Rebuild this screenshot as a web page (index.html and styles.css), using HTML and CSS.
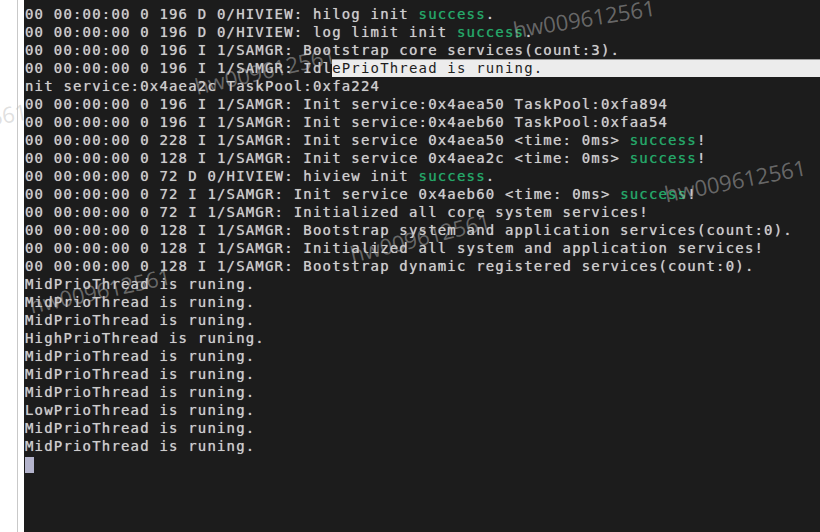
FILE: index.html
```html
<!DOCTYPE html>
<html>
<head>
<meta charset="utf-8">
<link rel="stylesheet" href="styles.css">
</head>
<body>
<div class="screen">
  <div class="gutter"></div>
  <div class="term">
    <div class="line">00 00:00:00 0 196 D 0/HIVIEW: hilog init <span class="ok">success</span>.</div>
    <div class="line">00 00:00:00 0 196 D 0/HIVIEW: log limit init <span class="ok">success</span>.</div>
    <div class="line">00 00:00:00 0 196 I 1/SAMGR: Bootstrap core services(count:3).</div>
    <div class="line row"><span>00 00:00:00 0 196 I 1/SAMGR: Idl</span><span class="sel">ePrioThread is runing.</span></div>
    <div class="line">nit service:0x4aea2c TaskPool:0xfa224</div>
    <div class="line">00 00:00:00 0 196 I 1/SAMGR: Init service:0x4aea50 TaskPool:0xfa894</div>
    <div class="line">00 00:00:00 0 196 I 1/SAMGR: Init service:0x4aeb60 TaskPool:0xfaa54</div>
    <div class="line">00 00:00:00 0 228 I 1/SAMGR: Init service 0x4aea50 &lt;time: 0ms&gt; <span class="ok">success</span>!</div>
    <div class="line">00 00:00:00 0 128 I 1/SAMGR: Init service 0x4aea2c &lt;time: 0ms&gt; <span class="ok">success</span>!</div>
    <div class="line">00 00:00:00 0 72 D 0/HIVIEW: hiview init <span class="ok">success</span>.</div>
    <div class="line">00 00:00:00 0 72 I 1/SAMGR: Init service 0x4aeb60 &lt;time: 0ms&gt; <span class="ok">success</span>!</div>
    <div class="line">00 00:00:00 0 72 I 1/SAMGR: Initialized all core system services!</div>
    <div class="line">00 00:00:00 0 128 I 1/SAMGR: Bootstrap system and application services(count:0).</div>
    <div class="line">00 00:00:00 0 128 I 1/SAMGR: Initialized all system and application services!</div>
    <div class="line">00 00:00:00 0 128 I 1/SAMGR: Bootstrap dynamic registered services(count:0).</div>
    <div class="line">MidPrioThread is runing.</div>
    <div class="line">MidPrioThread is runing.</div>
    <div class="line">MidPrioThread is runing.</div>
    <div class="line">HighPrioThread is runing.</div>
    <div class="line">MidPrioThread is runing.</div>
    <div class="line">MidPrioThread is runing.</div>
    <div class="line">MidPrioThread is runing.</div>
    <div class="line">LowPrioThread is runing.</div>
    <div class="line">MidPrioThread is runing.</div>
    <div class="line">MidPrioThread is runing.</div>
    <div class="line"><span class="cursor"></span></div>
  </div>
  <span class="wm wm1">hw009612561</span>
  <span class="wm wm2">hw009612561</span>
  <span class="wm wm3">hw009612561</span>
  <span class="wm wm4">hw009612561</span>
  <span class="wm wm5">hw009612561</span>
  <span class="wm wm6">hw009612561</span>
</div>
</body>
</html>
```

FILE: styles.css
```css
html, body {
  margin: 0;
  padding: 0;
  background: #ffffff;
}
.screen {
  position: relative;
  width: 820px;
  height: 532px;
  display: flex;
  overflow: hidden;
}
.gutter {
  width: 17px;
  border-right: 1px solid #c9c9c9;
  margin-right: 6px;
  background: #ffffff;
}
.term {
  flex: 1;
  background: #1c1c1c;
  padding: 5px 0 0 1px;
  font-family: "DejaVu Sans Mono", monospace;
  font-size: 14px;
  letter-spacing: 1.17px;
  color: #cdcdcd;
  text-shadow: 0 0 0.7px rgba(205, 205, 205, 0.8);
}
.line {
  height: 18px;
  line-height: 18px;
  white-space: pre;
}
.row {
  display: flex;
}
.sel {
  flex: 1;
  box-sizing: border-box;
  background: #ececec;
  border-top: 1px solid #9c9c9c;
  color: #1e1e1e;
  text-shadow: none;
  line-height: 16px;
}
.ok {
  color: #25a868;
  text-shadow: 0 0 0.7px rgba(37, 168, 104, 0.8);
}
.cursor {
  display: inline-block;
  width: 9px;
  height: 16px;
  margin-top: 2px;
  vertical-align: top;
  background: #b4b4cc;
}
.wm {
  position: absolute;
  width: 160px;
  height: 30px;
  line-height: 30px;
  text-align: center;
  font-family: "Open Sans", sans-serif;
  font-size: 22px;
  color: rgba(190, 190, 190, 0.48);
  white-space: nowrap;
}
.wm1 { left: 504px; top: 3px; transform: rotate(-9deg); }
.wm2 { left: 655px; top: 165px; transform: rotate(-11deg); }
.wm3 { left: 185px; top: 55px; transform: rotate(-13deg); }
.wm4 { left: -124px; top: 108px; transform: rotate(-10deg); }
.wm5 { left: 340px; top: 222px; transform: rotate(-14deg); }
.wm6 { left: 20px; top: 275px; transform: rotate(-12deg); }
```
